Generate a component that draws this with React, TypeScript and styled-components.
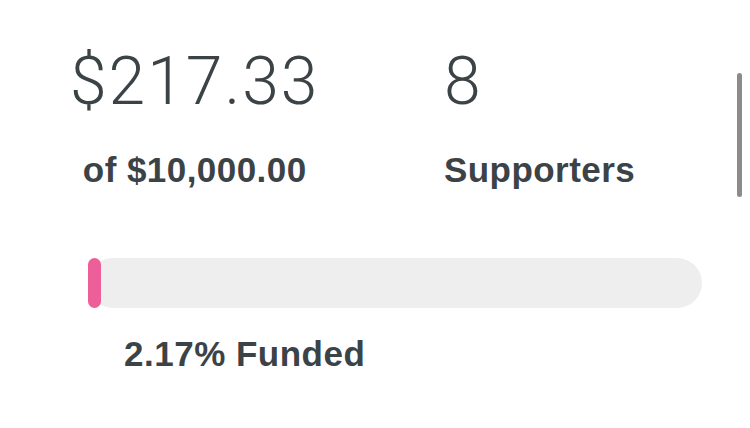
import React from "react";
import styled, { createGlobalStyle } from "styled-components";

const GlobalStyle = createGlobalStyle`
  html, body {
    margin: 0;
    padding: 0;
    background: #ffffff;
  }
  body {
    width: 750px;
    height: 428px;
    overflow: hidden;
  }
`;

const Screen = styled.main`
  position: relative;
  width: 750px;
  height: 428px;
  box-sizing: border-box;
  padding: 49px 0 0 70px;
  background: #ffffff;
  color: #3c4347;
  font-family: "Liberation Sans", Arial, sans-serif;
`;

const StatsRow = styled.section`
  display: grid;
  grid-template-columns: 374px auto;
  align-items: start;
`;

const Stat = styled.div<{ $centered?: boolean }>`
  justify-self: start;
  display: flex;
  flex-direction: column;
  align-items: ${(p) => (p.$centered ? "center" : "flex-start")};
`;

const StatValue = styled.div`
  font-family: Roboto, "Liberation Sans", sans-serif;
  font-weight: 300;
  font-size: 66px;
  line-height: 66px;
  letter-spacing: 2px;
  color: #3c4347;
`;

const StatLabel = styled.div`
  margin-top: 35px;
  font-weight: 700;
  font-size: 35px;
  line-height: 40px;
  letter-spacing: 0.45px;
  color: #3c4347;
`;

const Track = styled.div`
  margin: 68px 0 0 18px;
  width: 614px;
  height: 50px;
  border-radius: 25px;
  background: #eeeeee;
`;

const Fill = styled.div`
  height: 100%;
  border-radius: 7px;
  background: #ec5f98;
`;

const FundedLabel = styled.div`
  margin: 26px 0 0 54px;
  font-weight: 700;
  font-size: 35px;
  line-height: 40px;
  letter-spacing: 0.5px;
  color: #3c4347;
`;

const ScrollIndicator = styled.div`
  position: absolute;
  top: 73px;
  right: 8px;
  width: 5px;
  height: 124px;
  border-radius: 3px;
  background: #8b8b8b;
`;

export default function App() {
  const raised = 217.33;
  const goal = 10000;
  const percent = (raised / goal) * 100;
  return (
    <>
      <GlobalStyle />
      <Screen>
        <StatsRow>
          <Stat $centered>
            <StatValue>$217.33</StatValue>
            <StatLabel>of $10,000.00</StatLabel>
          </Stat>
          <Stat>
            <StatValue>8</StatValue>
            <StatLabel>Supporters</StatLabel>
          </Stat>
        </StatsRow>
        <Track>
          <Fill style={{ width: `${percent}%` }} />
        </Track>
        <FundedLabel>{percent.toFixed(2)}% Funded</FundedLabel>
        <ScrollIndicator />
      </Screen>
    </>
  );
}
